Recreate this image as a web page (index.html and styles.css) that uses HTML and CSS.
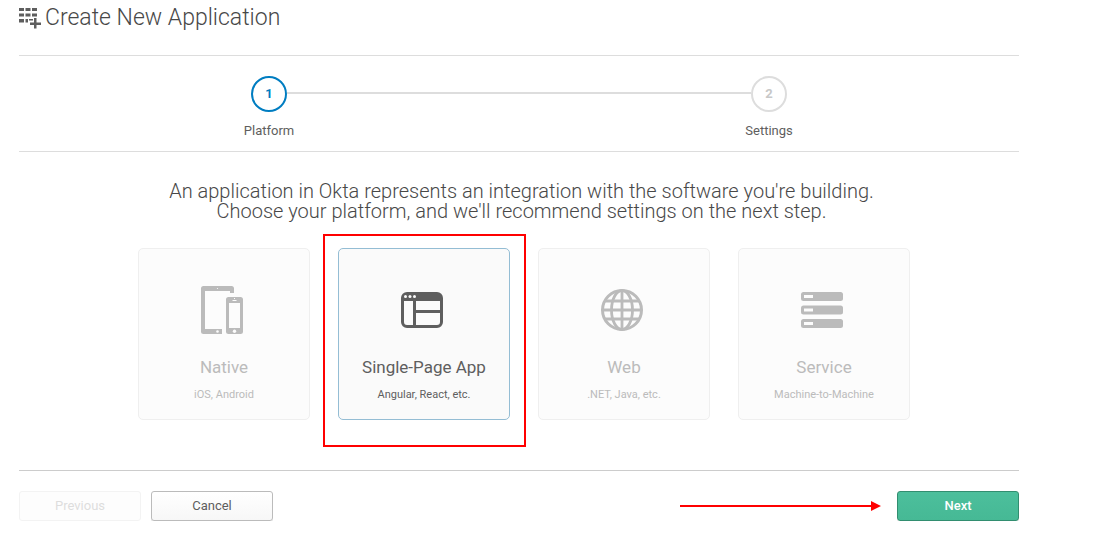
FILE: index.html
```html
<!DOCTYPE html>
<html lang="en">
<head>
<meta charset="utf-8">
<meta name="viewport" content="width=device-width, initial-scale=1">
<title>Create New Application</title>
<link rel="stylesheet" href="styles.css">
</head>
<body>
<main class="wizard">
  <header class="wizard-header">
    <svg class="header-icon" viewBox="0 0 22 22" aria-hidden="true">
      <path fill="currentColor" d="M0 1h5v3H0zM6.500 1h5v3h-5zM13 1h5v3h-5zM0 6.500h5v3H0zM6.500 6.500h5v3h-5zM13 6.500h5v3h-5zM0 12h5v3.500H0zM6.500 12h2.500v3.500H6.500zM10 12h4v1.500h-4zM15 11h2.500v4.500H22V18h-4.500v3.500H15V18h-4v-2.500h4z"/>
    </svg>
    <h1 class="wizard-title">Create New Application</h1>
  </header>

  <ol class="steps">
    <li class="step step-current" aria-current="step">
      <span class="step-number">1</span>
      <span class="step-label">Platform</span>
    </li>
    <li class="step">
      <span class="step-number">2</span>
      <span class="step-label">Settings</span>
    </li>
  </ol>

  <form class="platform-form">
    <div class="intro" id="intro">
      <p class="intro-line">An application in Okta represents an integration with the software you're building.</p>
      <p class="intro-line">Choose your platform, and we'll recommend settings on the next step.</p>
    </div>

    <div class="cards" role="radiogroup" aria-labelledby="intro">
      <label class="card" for="native">
        <input class="card-input" type="radio" name="platform" id="native">
        <svg class="card-icon" viewBox="0 0 48 50" aria-hidden="true">
          <path fill="currentColor" fill-rule="evenodd" d="M3.500 1h28A2.500 2.500 0 0 1 34 3.500V8h-4V6H5v38h17v5H3.500A2.500 2.500 0 0 1 1 46.500v-43A2.500 2.500 0 0 1 3.500 1zM28.500 12h12a2.500 2.500 0 0 1 2.500 2.500v32a2.500 2.500 0 0 1-2.500 2.500h-12a2.500 2.500 0 0 1-2.500-2.500v-32a2.500 2.500 0 0 1 2.500-2.500zM29 18v25h11V18z"/>
          <circle class="icon-gap" cx="17.500" cy="3.500" r=".6"/>
          <circle class="icon-gap" cx="17.500" cy="46.500" r="1.300"/>
          <circle class="icon-gap" cx="34.500" cy="46.200" r="1.700"/>
          <path class="icon-gap" d="M32.500 15h4v1h-4zM34 13h1v1h-1z"/>
        </svg>
        <span class="card-title">Native</span>
        <span class="card-text">iOS, Android</span>
      </label>

      <label class="card" for="spa">
        <input class="card-input" type="radio" name="platform" id="spa" checked>
        <svg class="card-icon" viewBox="0 0 48 50" aria-hidden="true">
          <path fill="currentColor" fill-rule="evenodd" d="M7 7h30a6 6 0 0 1 6 6v24a6 6 0 0 1-6 6H7a6 6 0 0 1-6-6V13a6 6 0 0 1 6-6zM4 16v21a3 3 0 0 0 3 3h6V16zM16 16v9h24v-9zM16 28v12h21a3 3 0 0 0 3-3v-9z"/>
          <circle class="icon-gap" cx="5.500" cy="11.500" r="1.500"/>
          <circle class="icon-gap" cx="10" cy="11.500" r="1.500"/>
          <circle class="icon-gap" cx="14.500" cy="11.500" r="1.500"/>
        </svg>
        <span class="card-title">Single-Page App</span>
        <span class="card-text">Angular, React, etc.</span>
      </label>

      <label class="card" for="web">
        <input class="card-input" type="radio" name="platform" id="web">
        <svg class="card-icon" viewBox="0 0 48 50" aria-hidden="true">
          <g fill="none" stroke="currentColor" stroke-width="2.800">
            <circle cx="22" cy="25" r="19.500" stroke-width="3"/>
            <ellipse cx="22" cy="25" rx="10.500" ry="19.500"/>
            <path d="M22 5v40M2 25h40M5 16h34M5 34h34"/>
          </g>
        </svg>
        <span class="card-title">Web</span>
        <span class="card-text">.NET, Java, etc.</span>
      </label>

      <label class="card" for="service">
        <input class="card-input" type="radio" name="platform" id="service">
        <svg class="card-icon" viewBox="0 0 48 50" aria-hidden="true">
          <g fill="currentColor">
            <rect x="1" y="7" width="42" height="9" rx="2.500"/>
            <rect x="1" y="20.500" width="42" height="9" rx="2.500"/>
            <rect x="1" y="34" width="42" height="9" rx="2.500"/>
          </g>
          <path class="icon-gap" d="M4 10h9v3H4zM4 23.500h9v3H4zM4 37h9v3H4z"/>
        </svg>
        <span class="card-title">Service</span>
        <span class="card-text">Machine-to-Machine</span>
      </label>
    </div>

    <footer class="actions">
      <button class="button" type="button" disabled>Previous</button>
      <button class="button" type="button">Cancel</button>
      <svg class="arrow" viewBox="0 0 202 12" aria-hidden="true">
        <path fill="currentColor" d="M0 5h191V1l10 5-10 5V7H0z"/>
      </svg>
      <button class="button button-primary" type="submit">Next</button>
    </footer>
  </form>
</main>
</body>
</html>
```
FILE: styles.css
```css
* {
  box-sizing: border-box;
}

body {
  margin: 0;
  background: #fff;
  color: #5e5e5e;
  font-family: Roboto, "Open Sans", sans-serif;
  font-size: 13px;
  line-height: 20px;
}

.wizard {
  margin: 0 80px 0 19px;
}

.wizard-header {
  display: flex;
  align-items: center;
  gap: 4px;
  padding: 2px 0 21px;
}

.header-icon {
  width: 22px;
  height: 22px;
}

.wizard-title {
  margin: 0;
  color: #484848;
  font-size: 23px;
  font-weight: 300;
  line-height: 32px;
}

.steps {
  display: grid;
  grid-template-columns: 1fr 1fr;
  margin: 0;
  padding: 20px 0 10px;
  border-top: 1px solid #ddd;
  border-bottom: 1px solid #ddd;
  list-style: none;
}

.step {
  position: relative;
  display: flex;
  flex-direction: column;
  align-items: center;
  gap: 9px;
}

.step + .step::before {
  content: "";
  position: absolute;
  top: 16px;
  right: calc(50% + 18px);
  width: calc(100% - 36px);
  height: 2px;
  background: #ddd;
}

.step-number {
  width: 36px;
  height: 36px;
  border: 2px solid #ddd;
  border-radius: 50%;
  color: #c8c8c8;
  font-weight: 700;
  line-height: 32px;
  text-align: center;
}

.step-current .step-number {
  border-color: #007dc1;
  color: #007dc1;
}

.intro {
  margin: 29px 0 27px;
  padding-left: 5px;
  color: #484848;
  font-size: 20px;
  font-weight: 300;
  text-align: center;
}

.intro-line {
  margin: 0;
}

.cards {
  display: flex;
  flex-wrap: wrap;
  justify-content: center;
  gap: 28px;
  margin-bottom: 50px;
  padding-left: 10px;
}

.card {
  position: relative;
  display: flex;
  flex-direction: column;
  align-items: center;
  width: 172px;
  padding: 36px 0 14px;
  border: 1px solid #efefef;
  border-radius: 5px;
  background: #fcfcfc;
  color: #bbb;
  cursor: pointer;
}

.card:has(:checked) {
  border-color: #94bdd4;
  background: #fafafa;
  color: #5e5e5e;
}

.card:has(:checked)::after {
  content: "";
  position: absolute;
  inset: -15px -17px -28px -16px;
  border: 2px solid #f00;
  pointer-events: none;
}

.card-input {
  position: absolute;
  margin: 0;
  opacity: 0;
}

.card-icon {
  width: 48px;
  height: 50px;
}

.icon-gap {
  fill: #fcfcfc;
}

.card-title {
  margin-top: 21px;
  font-size: 17px;
  line-height: 22px;
}

.card-text {
  margin-top: 7px;
  font-size: 11px;
}

.actions {
  display: flex;
  align-items: center;
  gap: 10px;
  padding-top: 20px;
  border-top: 1px solid #ccc;
}

.button {
  width: 122px;
  height: 30px;
  padding: 0;
  border: 1px solid #bbb;
  border-radius: 3px;
  background: linear-gradient(#fff, #f7f7f7);
  box-shadow: 0 1px 0 #e4e4e4;
  color: #5e5e5e;
  font: inherit;
}

.button:disabled {
  border-color: #f3f3f3;
  background: #fdfdfd;
  box-shadow: none;
  color: #ddd;
}

.button-primary {
  border-color: #328e70;
  background: linear-gradient(#4cbf9c, #46b995);
  color: #fff;
  font-weight: 500;
}

.arrow {
  width: 202px;
  height: 12px;
  margin-right: 5px;
  margin-left: auto;
  color: #f00;
}
```
